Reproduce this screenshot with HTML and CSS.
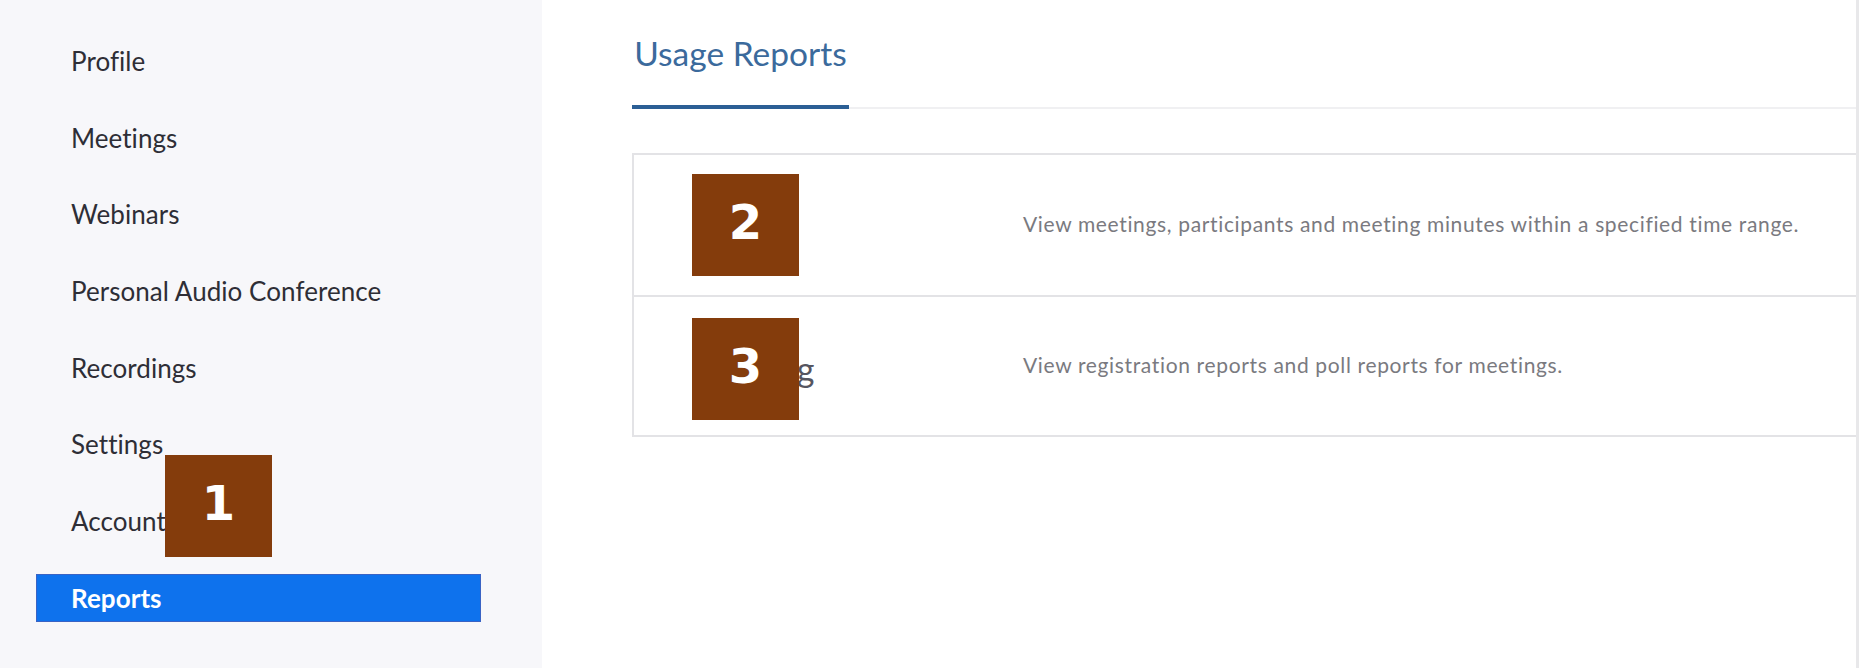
FILE: index.html
```html
<!DOCTYPE html>
<html>
<head>
<meta charset="utf-8">
<link rel="stylesheet" href="styles.css">
</head>
<body>
<div class="page">
  <aside class="sidebar">
    <nav class="nav">
      <a class="nav-item">Profile</a>
      <a class="nav-item">Meetings</a>
      <a class="nav-item">Webinars</a>
      <a class="nav-item">Personal Audio Conference</a>
      <a class="nav-item">Recordings</a>
      <a class="nav-item">Settings</a>
      <a class="nav-item">Account</a>
      <a class="nav-item active">Reports</a>
    </nav>
  </aside>
  <main class="main">
    <div class="tabs">
      <div class="tab active">Usage Reports</div>
    </div>
    <div class="card">
      <div class="row">
        <div class="row-title">Usage</div>
        <div class="row-desc">View meetings, participants and meeting minutes within a specified time range.</div>
      </div>
      <div class="row">
        <div class="row-title">Meeting</div>
        <div class="row-desc">View registration reports and poll reports for meetings.</div>
      </div>
    </div>
  </main>
  <div class="badge badge-1">1</div>
  <div class="badge badge-2">2</div>
  <div class="badge badge-3">3</div>
</div>
</body>
</html>
```

FILE: styles.css
```css
* { box-sizing: border-box; }
html, body { margin: 0; padding: 0; background: #ffffff; }
body { font-family: Lato, "Open Sans", "Liberation Sans", sans-serif; }

.page {
  position: relative;
  display: flex;
  width: 1859px;
  height: 668px;
  overflow: hidden;
}

.sidebar {
  width: 542px;
  flex: none;
  background: #f7f7fa;
  padding-top: 37px;
}

.nav {
  display: flex;
  flex-direction: column;
  gap: 28.7px;
}

.nav-item {
  display: flex;
  align-items: center;
  height: 48px;
  margin-left: 36px;
  width: 445px;
  padding-left: 35px;
  font-size: 26px;
  color: #2e2e36;
  letter-spacing: 0.05px;
}

.nav-item.active {
  background: #0e72ed;
  border: 1px solid #3a63c4;
  padding-left: 34px;
  color: #ffffff;
  font-weight: 700;
}

.main {
  flex: 1;
  padding-left: 90px;
  border-right: 3px solid #e8e8ea;
}

.tabs {
  display: flex;
  border-bottom: 2px solid #f0f0f2;
}

.tab {
  width: 217px;
  height: 109px;
  padding-top: 33px;
  font-size: 33.5px;
  color: #3b6a9c;
  text-align: center;
  border-bottom: 4px solid #2b5f95;
  margin-bottom: -2px;
}

.card {
  margin-top: 44px;
  border: 2px solid #e3e3e6;
  border-right: none;
}

.row {
  display: flex;
  align-items: center;
  height: 140px;
  padding-left: 56px;
}

.row + .row {
  border-top: 2px solid #e3e3e6;
}

.row-title {
  width: 333px;
  flex: none;
  font-size: 34px;
  color: #555560;
  padding-top: 4px;
}

.row-desc {
  font-size: 21px;
  letter-spacing: 0.65px;
  color: #7a7a80;
  padding-bottom: 4px;
}

.badge {
  position: absolute;
  width: 107px;
  height: 102px;
  background: #843c0c;
  color: #ffffff;
  font-family: "DejaVu Sans", "Liberation Sans", sans-serif;
  font-weight: 700;
  font-size: 48px;
  display: flex;
  align-items: center;
  justify-content: center;
  padding-bottom: 6px;
}

.badge-1 { left: 165px; top: 455px; }
.badge-2 { left: 692px; top: 174px; }
.badge-3 { left: 692px; top: 318px; }
```
